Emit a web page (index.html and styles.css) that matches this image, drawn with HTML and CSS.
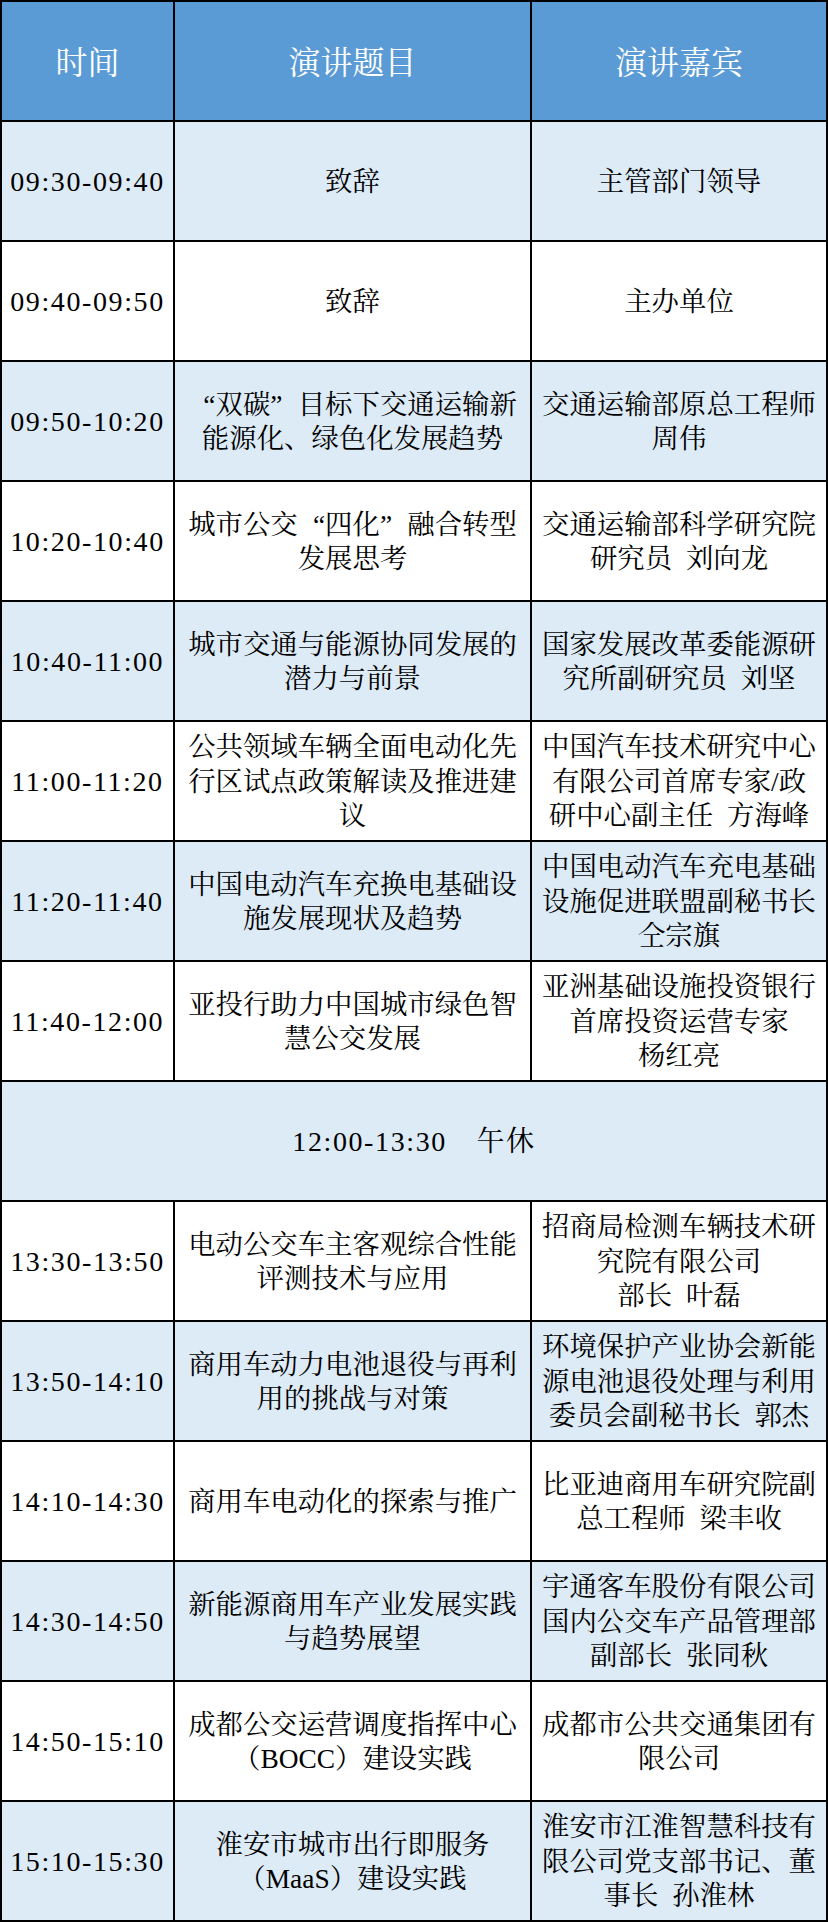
FILE: index.html
```html
<!DOCTYPE html>
<html lang="zh-CN">
<head>
<meta charset="utf-8">
<title>议程</title>
<link rel="stylesheet" href="styles.css">
</head>
<body>
<div class="schedule">
  <div class="cell head">时间</div>
  <div class="cell head">演讲题目</div>
  <div class="cell head">演讲嘉宾</div>

  <div class="cell time light">09:30-09:40</div>
  <div class="cell light">致辞</div>
  <div class="cell light">主管部门领导</div>

  <div class="cell time">09:40-09:50</div>
  <div class="cell">致辞</div>
  <div class="cell">主办单位</div>

  <div class="cell time light">09:50-10:20</div>
  <div class="cell light"><span class="txt"><span class="ql">“</span>双碳<span class="qr">”</span>目标下交通运输新<br>能源化、绿色化发展趋势</span></div>
  <div class="cell light">交通运输部原总工程师<br>周伟</div>

  <div class="cell time">10:20-10:40</div>
  <div class="cell"><span class="txt">城市公交<span class="ql">“</span>四化<span class="qr">”</span>融合转型<br>发展思考</span></div>
  <div class="cell">交通运输部科学研究院<br>研究员 刘向龙</div>

  <div class="cell time light">10:40-11:00</div>
  <div class="cell light">城市交通与能源协同发展的<br>潜力与前景</div>
  <div class="cell light">国家发展改革委能源研<br>究所副研究员 刘坚</div>

  <div class="cell time">11:00-11:20</div>
  <div class="cell">公共领域车辆全面电动化先<br>行区试点政策解读及推进建<br>议</div>
  <div class="cell">中国汽车技术研究中心<br>有限公司首席专家/政<br>研中心副主任 方海峰</div>

  <div class="cell time light">11:20-11:40</div>
  <div class="cell light">中国电动汽车充换电基础设<br>施发展现状及趋势</div>
  <div class="cell light">中国电动汽车充电基础<br>设施促进联盟副秘书长<br>仝宗旗</div>

  <div class="cell time">11:40-12:00</div>
  <div class="cell">亚投行助力中国城市绿色智<br>慧公交发展</div>
  <div class="cell">亚洲基础设施投资银行<br>首席投资运营专家<br>杨红亮</div>

  <div class="cell lunch light"><span class="txt">12:00-13:30　午休</span></div>

  <div class="cell time">13:30-13:50</div>
  <div class="cell">电动公交车主客观综合性能<br>评测技术与应用</div>
  <div class="cell">招商局检测车辆技术研<br>究院有限公司<br>部长 叶磊</div>

  <div class="cell time light">13:50-14:10</div>
  <div class="cell light">商用车动力电池退役与再利<br>用的挑战与对策</div>
  <div class="cell light">环境保护产业协会新能<br>源电池退役处理与利用<br>委员会副秘书长 郭杰</div>

  <div class="cell time">14:10-14:30</div>
  <div class="cell">商用车电动化的探索与推广</div>
  <div class="cell">比亚迪商用车研究院副<br>总工程师 梁丰收</div>

  <div class="cell time light">14:30-14:50</div>
  <div class="cell light">新能源商用车产业发展实践<br>与趋势展望</div>
  <div class="cell light">宇通客车股份有限公司<br>国内公交车产品管理部<br>副部长 张同秋</div>

  <div class="cell time">14:50-15:10</div>
  <div class="cell">成都公交运营调度指挥中心<br>（BOCC）建设实践</div>
  <div class="cell">成都市公共交通集团有<br>限公司</div>

  <div class="cell time light">15:10-15:30</div>
  <div class="cell light">淮安市城市出行即服务<br>（MaaS）建设实践</div>
  <div class="cell light">淮安市江淮智慧科技有<br>限公司党支部书记、董<br>事长 孙淮林</div>
</div>
</body>
</html>
```

FILE: styles.css
```css
html, body {
  margin: 0;
  padding: 0;
  background: #ffffff;
}

.schedule {
  width: 828px;
  box-sizing: border-box;
  display: grid;
  grid-template-columns: 171px 355px 294px;
  grid-auto-rows: 118px;
  gap: 2px;
  padding: 2px;
  background: #000000;
  font-family: "Liberation Serif", "Noto Serif CJK SC", "Noto Sans CJK SC", serif;
  font-size: 27.4px;
  line-height: 34.5px;
  color: #000000;
}

.cell {
  background: #ffffff;
  display: flex;
  align-items: center;
  justify-content: center;
  text-align: center;
  white-space: nowrap;
  word-spacing: 7px;
  padding-top: 2px;
  box-sizing: border-box;
}

.cell.light {
  background: #ddebf7;
}

.cell.head {
  background: #5b9bd5;
  color: #ffffff;
  font-size: 32px;
  padding-top: 4px;
}

.txt {
  display: block;
}

.ql,
.qr {
  display: inline-block;
  width: 1em;
}

.ql {
  text-align: right;
}

.qr {
  text-align: left;
}

.time,
.lunch {
  font-size: 28px;
  letter-spacing: 1.6px;
  word-spacing: 0;
}

.lunch {
  grid-column: 1 / 4;
}
```
